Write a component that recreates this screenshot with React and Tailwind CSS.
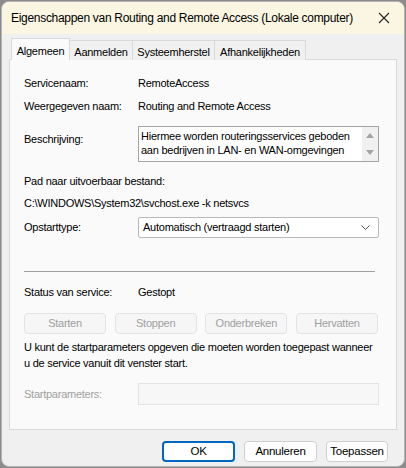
import { useState } from "react";

const font = { fontFamily: '"Liberation Sans", Arial, sans-serif' };

const Row = ({ label, children, className = "" }) => (
  <div className={`flex items-center ${className}`}>
    <div className="w-[114px] shrink-0">{label}</div>
    <div className="flex-1">{children}</div>
  </div>
);

const DisabledButton = ({ children }) => (
  <button className="w-[82px] h-[21px] rounded-[4px] border border-[#e3e3e3] bg-[#f6f6f6] text-[#a0a0a0]">
    {children}
  </button>
);

export default function App() {
  const [tab, setTab] = useState("Algemeen");
  const tabs = [
    { name: "Algemeen", w: "w-[59px]" },
    { name: "Aanmelden", w: "w-[64px]" },
    { name: "Systeemherstel", w: "w-[83px]" },
    { name: "Afhankelijkheden", w: "w-[92px]" },
  ];

  return (
    <div
      className="w-[406px] h-[468px] bg-[#8c8c8c] p-[1px] text-[11px] tracking-[-0.25px] text-black"
      style={font}
    >
      <div className="h-full rounded-[8px] overflow-hidden border border-[#b4b4b4] bg-[#f0f0f0] flex flex-col">
        {/* titelbalk */}
        <div className="h-[32px] shrink-0 bg-[#fbf6e2] flex items-center justify-between pl-[9px] pr-[14px]">
          <span className="text-[12px] tracking-[-0.3px] whitespace-nowrap">
            Eigenschappen van Routing and Remote Access (Lokale computer)
          </span>
          <svg width="12" height="12" viewBox="0 0 12 12" stroke="#222" strokeWidth="1.1">
            <path d="M1 1 L11 11 M11 1 L1 11" />
          </svg>
        </div>

        <div className="px-[7px] pt-[4px] flex-1 flex flex-col">
          {/* tabs */}
          <div className="flex items-end h-[22px] pl-[2px] relative z-10">
            {tabs.map((t, i) =>
              t.name === tab ? (
                <div
                  key={t.name}
                  onClick={() => setTab(t.name)}
                  className={`${t.w} h-[22px] pt-[4px] text-center bg-[#fafafa] border border-b-0 border-[#d9d9d9]`}
                >
                  {t.name}
                </div>
              ) : (
                <div
                  key={t.name}
                  onClick={() => setTab(t.name)}
                  className={`${t.w} h-[20px] pt-[3px] text-center bg-[#f0f0f0] border border-b-0 border-[#d9d9d9] ${i > 0 ? "-ml-[1px]" : ""}`}
                >
                  {t.name}
                </div>
              )
            )}
          </div>

          {/* panel */}
          <div className="h-[371px] -mt-[1px] border border-[#d9d9d9] bg-[#fafafa] pl-[14px] pr-[17px] pt-[15px]">
            <Row label="Servicenaam:" className="h-[16px]">RemoteAccess</Row>
            <Row label="Weergegeven naam:" className="h-[16px] mt-[7px]">Routing and Remote Access</Row>

            <div className="flex mt-[12px]">
              <div className="w-[114px] shrink-0 pt-[5px]">Beschrijving:</div>
              <div className="flex-1 h-[36px] border border-[#a5a5a5] bg-white flex">
                <div className="flex-1 pl-[2px] leading-[14px] pt-[2px]">
                  Hiermee worden routeringsservices geboden
                  <br />
                  aan bedrijven in LAN- en WAN-omgevingen
                </div>
                <div className="w-[16px] bg-[#f0f0f0] flex flex-col items-center justify-between py-[6px]">
                  <svg width="8" height="5" viewBox="0 0 8 5"><path d="M0 5 L4 0 L8 5Z" fill="#a3a3a3" /></svg>
                  <svg width="8" height="5" viewBox="0 0 8 5"><path d="M0 0 L4 5 L8 0Z" fill="#a3a3a3" /></svg>
                </div>
              </div>
            </div>

            <div className="mt-[11px] h-[16px] leading-[16px]">Pad naar uitvoerbaar bestand:</div>
            <div className="mt-[6px] h-[16px] leading-[16px]">C:\WINDOWS\System32\svchost.exe -k netsvcs</div>

            <Row label="Opstarttype:" className="mt-[6px]">
              <div className="h-[21px] border border-[#b9b9b9] rounded-[2px] bg-white flex items-center justify-between pl-[4px] pr-[8px]">
                <span>Automatisch (vertraagd starten)</span>
                <svg width="9" height="5" viewBox="0 0 9 5" fill="none" stroke="#555" strokeWidth="1">
                  <path d="M0.5 0.5 L4.5 4.5 L8.5 0.5" />
                </svg>
              </div>
            </Row>

            <div className="mt-[33px] h-px bg-[#a0a0a0] mr-[4px]" />

            <Row label="Status van service:" className="h-[16px] mt-[12px]">Gestopt</Row>

            <div className="flex justify-between mt-[13px] pr-[1px]">
              <DisabledButton>Starten</DisabledButton>
              <DisabledButton>Stoppen</DisabledButton>
              <DisabledButton>Onderbreken</DisabledButton>
              <DisabledButton>Hervatten</DisabledButton>
            </div>

            <p className="mt-[5px] leading-[16px] whitespace-nowrap">
              U kunt de startparameters opgeven die moeten worden toegepast wanneer
              <br />
              u de service vanuit dit venster start.
            </p>

            <Row label={<span className="text-[#a0a0a0]">Startparameters:</span>} className="mt-[12px]">
              <div className="h-[22px] border border-[#e3e3e3] bg-[#f7f7f7]" />
            </Row>
          </div>

          {/* knoppen */}
          <div className="flex justify-end gap-[9px] mt-[11px] pr-[9px] text-[11.5px]">
            <button className="w-[73px] h-[21px] rounded-[4px] border-2 border-[#0067c0] bg-white">OK</button>
            <button className="w-[73px] h-[21px] rounded-[4px] border border-[#cfcfcf] bg-[#fdfdfd]">Annuleren</button>
            <button className="w-[62px] h-[21px] rounded-[4px] border border-[#cfcfcf] bg-[#fdfdfd]">Toepassen</button>
          </div>
        </div>
      </div>
    </div>
  );
}
